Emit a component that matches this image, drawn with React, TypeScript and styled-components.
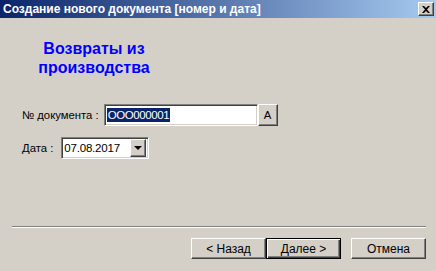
import styled, { createGlobalStyle } from 'styled-components';

const GlobalStyle = createGlobalStyle`
  html, body {
    margin: 0;
    padding: 0;
    background: #d4d0c8;
  }
  * {
    box-sizing: border-box;
  }
`;

const Window = styled.div`
  width: 436px;
  height: 271px;
  display: flex;
  flex-direction: column;
  background: #d4d0c8;
  font-family: 'Liberation Sans', Arial, sans-serif;
  font-size: 11.3px;
  color: #000;
  overflow: hidden;
`;

const TitleBar = styled.div`
  height: 18px;
  display: flex;
  align-items: center;
  justify-content: space-between;
  padding: 0 2px 0 3px;
  background: linear-gradient(to right, #0a246a, #a6caf0);
`;

const Title = styled.div`
  color: #fff;
  font-weight: bold;
  font-size: 12px;
`;

const CloseButton = styled.div`
  width: 16px;
  height: 14px;
  background: #d4d0c8;
  border: 1px solid;
  border-color: #fff #404040 #404040 #fff;
  box-shadow: inset -1px -1px #808080;
  display: flex;
  align-items: center;
  justify-content: center;
`;

const Body = styled.div`
  flex: 1;
  display: flex;
  flex-direction: column;
  padding: 21px 10px 12px 12px;
`;

const Heading = styled.div`
  width: 188px;
  margin-left: -12px;
  text-align: center;
  color: #0000ff;
  font-weight: bold;
  font-size: 16px;
  line-height: 19px;
`;

const Form = styled.div`
  display: flex;
  flex-direction: column;
  gap: 11px;
  margin-top: 27px;
  padding-left: 10px;
`;

const Row = styled.div`
  display: flex;
  align-items: center;
`;

const Label = styled.span<{ $gap: number }>`
  margin-right: ${(p) => p.$gap}px;
`;

const Sunken = styled.div<{ $w: number; $h: number }>`
  width: ${(p) => p.$w}px;
  height: ${(p) => p.$h}px;
  background: #fff;
  border: 1px solid;
  border-color: #808080 #fff #fff #808080;
  box-shadow: inset 1px 1px #404040, inset -1px -1px #d4d0c8;
  display: flex;
  align-items: center;
  padding: 0 2px;
  font-size: 11.5px;
`;

const Selected = styled.span`
  background: #0a246a;
  color: #fff;
  line-height: 14px;
  padding: 0 1px;
  letter-spacing: -0.4px;
`;

const DateText = styled.span`
  flex: 1;
  letter-spacing: -0.2px;
`;

const RaisedBox = styled.div<{ $w: number; $h: number }>`
  width: ${(p) => p.$w}px;
  height: ${(p) => p.$h}px;
  background: #d4d0c8;
  border: 1px solid;
  border-color: #fff #404040 #404040 #fff;
  box-shadow: inset -1px -1px #808080, inset 1px 1px #d4d0c8;
  display: flex;
  align-items: center;
  justify-content: center;
`;

const Arrow = styled.div`
  width: 0;
  height: 0;
  border-left: 4px solid transparent;
  border-right: 4px solid transparent;
  border-top: 4px solid #000;
`;

const Spacer = styled.div`
  flex: 1;
`;

const Separator = styled.div`
  height: 2px;
  width: 414px;
  border-top: 1px solid #808080;
  border-bottom: 1px solid #fff;
`;

const Buttons = styled.div`
  display: flex;
  justify-content: flex-end;
  margin-top: 10px;
`;

const Button = styled.div<{ $default?: boolean; $space?: number }>`
  width: 75px;
  height: 21px;
  margin-left: ${(p) => p.$space ?? 0}px;
  background: #d4d0c8;
  border: 1px solid;
  border-color: ${(p) => (p.$default ? '#000' : '#fff #404040 #404040 #fff')};
  box-shadow: ${(p) =>
    p.$default
      ? 'inset 1px 1px #fff, inset -1px -1px #404040, inset -2px -2px #808080'
      : 'inset -1px -1px #808080'};
  display: flex;
  align-items: center;
  justify-content: center;
  font-size: 12px;
`;

export default function App() {
  return (
    <>
      <GlobalStyle />
      <Window>
        <TitleBar>
          <Title>Создание нового документа [номер и дата]</Title>
          <CloseButton>
            <svg width="8" height="7" viewBox="0 0 8 7">
              <path d="M0 0 L2 0 L4 2 L6 0 L8 0 L5 3.5 L8 7 L6 7 L4 5 L2 7 L0 7 L3 3.5 Z" fill="#000" />
            </svg>
          </CloseButton>
        </TitleBar>
        <Body>
          <Heading>
            Возвраты из
            <br />
            производства
          </Heading>
          <Form>
            <Row>
              <Label $gap={5}>№ документа :</Label>
              <Sunken $w={154} $h={22}>
                <Selected>ООО000001</Selected>
              </Sunken>
              <RaisedBox $w={20} $h={22}>A</RaisedBox>
            </Row>
            <Row>
              <Label $gap={8}>Дата :</Label>
              <Sunken $w={88} $h={22}>
                <DateText>07.08.2017</DateText>
                <RaisedBox $w={16} $h={18}>
                  <Arrow />
                </RaisedBox>
              </Sunken>
            </Row>
          </Form>
          <Spacer />
          <Separator />
          <Buttons>
            <Button>&lt; Назад</Button>
            <Button $default>Далее &gt;</Button>
            <Button $space={10}>Отмена</Button>
          </Buttons>
        </Body>
      </Window>
    </>
  );
}
